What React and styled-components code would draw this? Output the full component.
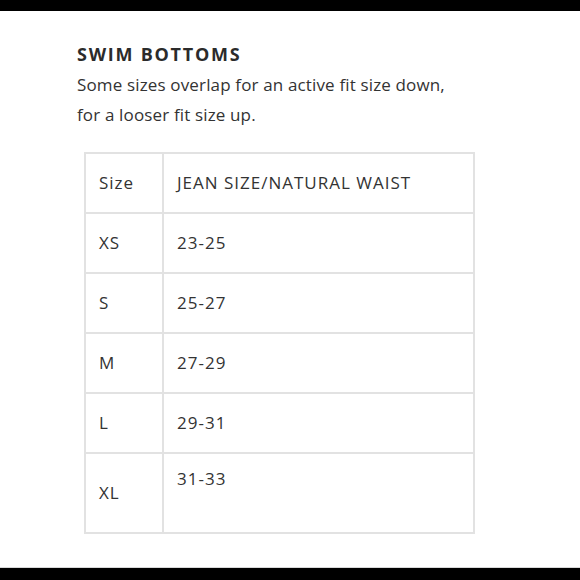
import React from 'react';
import styled, { createGlobalStyle } from 'styled-components';

const rows = [
  { size: 'XS', waist: '23-25' },
  { size: 'S', waist: '25-27' },
  { size: 'M', waist: '27-29' },
  { size: 'L', waist: '29-31' },
  { size: 'XL', waist: '31-33', tall: true },
];

export default function App() {
  return (
    <>
      <GlobalStyle />
      <Page>
        <Bar />
        <Content>
          <Title>SWIM BOTTOMS</Title>
          <Note>
            Some sizes overlap for an active fit size down,
            <br />
            for a looser fit size up.
          </Note>
          <Table>
            <tbody>
              <Row>
                <SizeCell>Size</SizeCell>
                <ValueCell>JEAN SIZE/NATURAL WAIST</ValueCell>
              </Row>
              {rows.map((row) => (
                <Row key={row.size} $tall={row.tall}>
                  <SizeCell>{row.size}</SizeCell>
                  <ValueCell $tall={row.tall}>{row.waist}</ValueCell>
                </Row>
              ))}
            </tbody>
          </Table>
        </Content>
        <Bar $bottom />
      </Page>
    </>
  );
}

const GlobalStyle = createGlobalStyle`
  html, body {
    margin: 0;
    padding: 0;
    background: #ffffff;
  }
`;

const Page = styled.div`
  width: 580px;
  height: 580px;
  display: flex;
  flex-direction: column;
  background: #ffffff;
  font-family: 'Open Sans', Lato, sans-serif;
  font-variant-ligatures: none;
  color: #333333;
  overflow: hidden;
`;

const Bar = styled.div`
  height: ${({ $bottom }) => ($bottom ? '12px' : '11px')};
  flex-shrink: 0;
  background: #000000;
  border-top: ${({ $bottom }) => ($bottom ? '1px solid #d8d8d8' : 'none')};
`;

const Content = styled.div`
  flex: 1;
  padding: 31px 0 0 77px;
`;

const Title = styled.h2`
  margin: 0;
  font-size: 18px;
  line-height: 24px;
  font-weight: 700;
  letter-spacing: 1.75px;
  color: #2b2b2b;
`;

const Note = styled.p`
  margin: 4px 0 0;
  font-size: 17px;
  line-height: 30px;
  font-weight: 400;
  letter-spacing: 0.15px;
  color: #333333;
`;

const Table = styled.table`
  margin: 22px 0 0 7px;
  width: 391px;
  border-collapse: collapse;
  font-size: 17px;
  letter-spacing: 1px;
  color: #333333;
`;

const Row = styled.tr`
  height: ${({ $tall }) => ($tall ? '80px' : '60px')};
`;

const Cell = styled.td`
  border: 2px solid #e2e2e2;
  padding: 0 13px;
  line-height: 24px;
  vertical-align: middle;
`;

const SizeCell = styled(Cell)`
  width: 78px;
  box-sizing: border-box;
`;

const ValueCell = styled(Cell)`
  vertical-align: ${({ $tall }) => ($tall ? 'top' : 'middle')};
  padding-top: ${({ $tall }) => ($tall ? '13px' : '0')};
`;
